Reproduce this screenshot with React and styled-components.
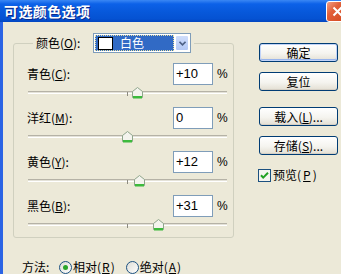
import React from "react"
import styled, { createGlobalStyle } from "styled-components"

const cjk = `"Noto Sans CJK SC", "Liberation Sans", sans-serif`
const latin = `"Liberation Sans", Arial, sans-serif`

const Global = createGlobalStyle`
    html, body {
        margin: 0;
        padding: 0;
        background: #ECE9D8;
    }
    #root {
        width: 341px;
        height: 274px;
        overflow: hidden;
    }
`

const Window = styled.div`
    width: 341px;
    height: 274px;
    display: flex;
    flex-direction: column;
    overflow: hidden;
    background: #ECE9D8;
    font-family: ${cjk};
    font-size: 12px;
    line-height: 14px;
    color: #000;
`

const TitleBar = styled.div`
    height: 22px;
    flex: none;
    display: flex;
    align-items: center;
    justify-content: space-between;
    overflow: hidden;
    background: linear-gradient(#3A87F4 0%, #0C61E8 18%, #0758DA 55%, #0552D2 85%, #0346C0 100%);
`

const Title = styled.div`
    color: #fff;
    font-weight: bold;
    font-size: 14px;
    line-height: 18px;
    letter-spacing: 0.4px;
    padding-left: 4px;
    text-shadow: 1px 1px 0 #0B2A8C;
`

const CloseBtn = styled.div`
    flex: none;
    width: 21px;
    height: 19px;
    margin-right: -8px;
    border: 1px solid #fff;
    border-radius: 3px;
    background: linear-gradient(135deg, #F1A085 0%, #E2603A 35%, #D2461C 100%);
    display: flex;
    align-items: center;
    justify-content: center;
`

const Body = styled.div`
    flex: 1;
    display: grid;
    grid-template-columns: 221px 79px;
    column-gap: 25px;
    align-items: start;
    padding: 11px 0 0 10px;
    border-left: 3px solid #2B64E4;
`

const LeftCol = styled.div`
    display: flex;
    flex-direction: column;
`

const Group = styled.fieldset`
    margin: 0;
    min-width: 0;
    width: 221px;
    height: 205px;
    box-sizing: border-box;
    padding: 10px 6px 0 13px;
    border: 1px solid #D0D0BF;
    border-radius: 3px;
`

const Legend = styled.legend`
    margin-left: 6px;
    padding: 0 3px;
    height: 20px;
    display: flex;
    align-items: center;
`

const LegendLabel = styled.span`
    width: 57px;
`

const Combo = styled.div`
    width: 98px;
    height: 20px;
    box-sizing: border-box;
    border: 1px solid #7F9DB9;
    background: #fff;
    padding: 1px;
    display: flex;
    gap: 1px;
`

const ComboValue = styled.div`
    flex: 1;
    display: flex;
    align-items: center;
    background: #316AC5;
    outline: 1px dotted #E8E0A0;
    outline-offset: -1px;
    color: #fff;
`

const Swatch = styled.span`
    width: 13px;
    height: 11px;
    margin: 0 7px 0 3px;
    background: ${(p) => p.$color};
    border: 1px solid #000;
`

const ComboArrow = styled.div`
    width: 14px;
    box-sizing: border-box;
    border: 1px solid #fff;
    border-radius: 2px;
    background: linear-gradient(#CFDDFB, #B3C8F5);
    display: flex;
    align-items: center;
    justify-content: center;
`

const Row = styled.div`
    display: flex;
    flex-direction: column;
`

const RowTop = styled.div`
    display: flex;
    align-items: center;
    height: 22px;
`

const Label = styled.div`
    flex: 1;
`

const Value = styled.div`
    width: 40px;
    height: 22px;
    box-sizing: border-box;
    border: 1px solid #7F9DB9;
    background: #fff;
    padding-left: 2px;
    font-family: ${latin};
    font-size: 13px;
    line-height: 20px;
`

const Percent = styled.div`
    width: 10px;
    margin-left: 4px;
    font-family: ${latin};
    font-size: 12px;
`

const Slider = styled.div`
    position: relative;
    height: 22px;
    margin-left: 1px;
`

const Track = styled.div`
    margin-top: 6px;
    height: 3px;
    box-sizing: border-box;
    border-top: 1px solid #B5B2A6;
    border-bottom: 1px solid #FFFFFF;
    background: #E4E2D8;
`

const Tick = styled.div`
    position: absolute;
    left: 99px;
    top: 7px;
    width: 1px;
    height: 4px;
    background: #8C8A80;
`

const Thumb = styled.svg`
    position: absolute;
    top: 2px;
    width: 11px;
    height: 12px;
`

const MethodRow = styled.div`
    display: flex;
    align-items: center;
    height: 14px;
    margin-top: 22px;
    padding-left: 9px;
`

const MethodLabel = styled.span`
    width: 37px;
`

const Option = styled.label`
    display: flex;
    align-items: center;
    gap: 1px;
    margin-right: ${(p) => p.$gap || 0}px;
`

const RightCol = styled.div`
    display: flex;
    flex-direction: column;
    padding-top: 10px;
`

const Button = styled.div`
    width: 79px;
    height: 19px;
    box-sizing: border-box;
    margin-top: ${(p) => p.$gap || 0}px;
    border: 1px solid #003C74;
    border-radius: 3px;
    background: linear-gradient(#FFFFFF 0%, #F5F4EF 55%, #E3DFD3 100%);
    box-shadow: ${(p) => (p.$default ? "inset 0 0 0 1px #C1D3F8, inset 0 -1px 0 1px #98B4EC" : "inset 0 -1px 0 #D6D0C5")};
    display: flex;
    align-items: center;
    justify-content: center;
    font-size: 12px;
`

const CheckRow = styled.label`
    display: flex;
    align-items: center;
    gap: 2px;
    margin-top: 13px;
    margin-left: -1px;
`

const U = styled.u`
    text-underline-offset: 1px;
`

function SliderThumb({ value }) {
    return (
        <Thumb viewBox="0 0 11 12" style={{ left: 94 + value }}>
            <polygon points="0.5,4.5 5.5,0.5 10.5,4.5 10.5,10.5 0.5,10.5" fill="#F4F4EE" stroke="#8FA68C" />
            <rect x="1" y="9" width="9" height="2.5" fill="#3DBA3D" />
        </Thumb>
    )
}

function Radio({ checked }) {
    return (
        <svg width="13" height="13" viewBox="0 0 13 13">
            <defs>
                <linearGradient id="rg" x1="0" y1="0" x2="1" y2="1">
                    <stop offset="0" stopColor="#DCDCD5" />
                    <stop offset="1" stopColor="#FFFFFF" />
                </linearGradient>
            </defs>
            <circle cx="6.5" cy="6.5" r="6" fill="url(#rg)" stroke="#1C5180" />
            {checked && <circle cx="6.5" cy="6.5" r="2.5" fill="#2AA52A" />}
        </svg>
    )
}

function Check() {
    return (
        <svg width="13" height="13" viewBox="0 0 13 13">
            <rect x="0.5" y="0.5" width="12" height="12" fill="#F4F4EE" stroke="#1C5180" />
            <path d="M3 6.2 L5.2 8.6 L10 3.8" fill="none" stroke="#21A121" strokeWidth="2" />
        </svg>
    )
}

const rows = [
    { name: "青色", key: "C", value: 10 },
    { name: "洋红", key: "M", value: 0 },
    { name: "黄色", key: "Y", value: 12 },
    { name: "黑色", key: "B", value: 31 },
]

export default function App() {
    return (
        <>
            <Global />
            <Window>
                <TitleBar>
                    <Title>可选颜色选项</Title>
                    <CloseBtn>
                        <svg width="11" height="11" viewBox="0 0 11 11">
                            <path d="M1.5 1.5 L9.5 9.5 M9.5 1.5 L1.5 9.5" stroke="#fff" strokeWidth="2" />
                        </svg>
                    </CloseBtn>
                </TitleBar>
                <Body>
                    <LeftCol>
                        <Group>
                            <Legend>
                                <LegendLabel>
                                    颜色(<U>O</U>):
                                </LegendLabel>
                                <Combo>
                                    <ComboValue>
                                        <Swatch $color="#fff" />
                                        白色
                                    </ComboValue>
                                    <ComboArrow>
                                        <svg width="7" height="5" viewBox="0 0 7 5">
                                            <path d="M0.5 0.8 L3.5 3.8 L6.5 0.8" fill="none" stroke="#4D6185" strokeWidth="1.6" />
                                        </svg>
                                    </ComboArrow>
                                </Combo>
                            </Legend>
                            {rows.map((r) => (
                                <Row key={r.key}>
                                    <RowTop>
                                        <Label>
                                            {r.name}(<U>{r.key}</U>):
                                        </Label>
                                        <Value>{r.value > 0 ? "+" + r.value : r.value}</Value>
                                        <Percent>%</Percent>
                                    </RowTop>
                                    <Slider>
                                        <Track />
                                        <Tick />
                                        <SliderThumb value={r.value} />
                                    </Slider>
                                </Row>
                            ))}
                        </Group>
                        <MethodRow>
                            <MethodLabel>方法:</MethodLabel>
                            <Option $gap={11}>
                                <Radio checked />
                                相对(<U>R</U>)
                            </Option>
                            <Option>
                                <Radio />
                                绝对(<U>A</U>)
                            </Option>
                        </MethodRow>
                    </LeftCol>
                    <RightCol>
                        <Button $default>确定</Button>
                        <Button $gap={10}>复位</Button>
                        <Button $gap={16}>
                            载入(<U>L</U>)...
                        </Button>
                        <Button $gap={10}>
                            存储(<U>S</U>)...
                        </Button>
                        <CheckRow>
                            <Check />
                            预览(<U>P</U>)
                        </CheckRow>
                    </RightCol>
                </Body>
            </Window>
        </>
    )
}
